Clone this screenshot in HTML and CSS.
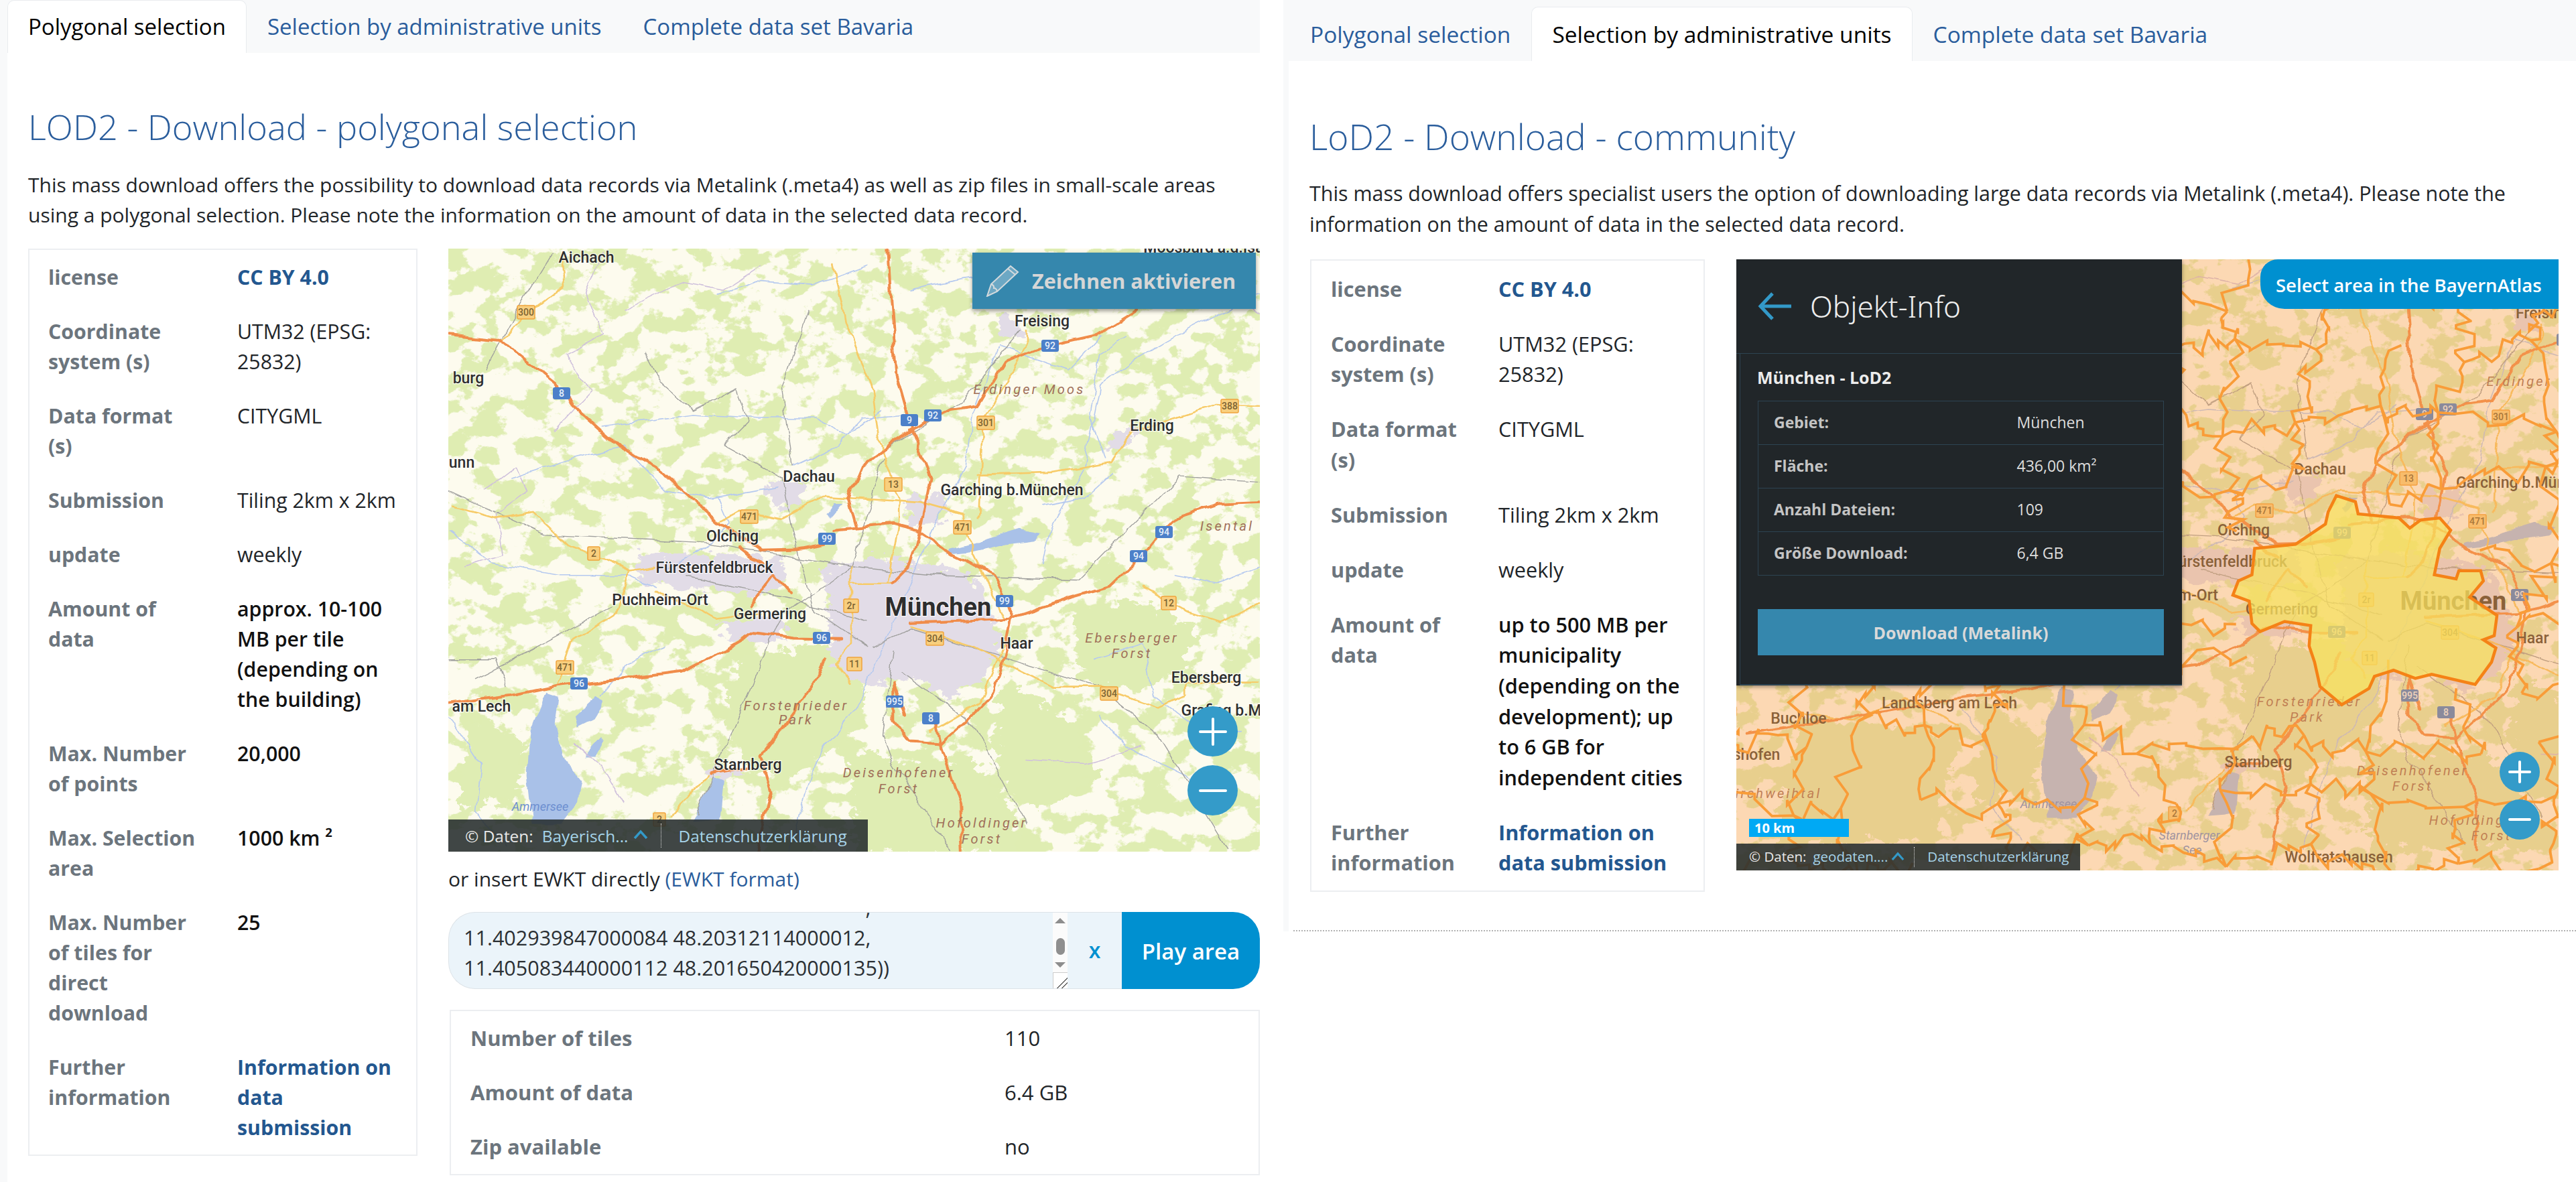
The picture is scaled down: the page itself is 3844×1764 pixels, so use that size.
FILE: index.html
```html
<!DOCTYPE html>
<html lang="en">
<head>
<meta charset="utf-8">
<title>LoD2 Download</title>
<link rel="stylesheet" href="styles.css">
</head>
<body>
<div class="page">

<section class="panel panel-a">
  <nav class="tabs">
    <a class="tab active">Polygonal selection</a>
    <a class="tab">Selection by administrative units</a>
    <a class="tab">Complete data set Bavaria</a>
  </nav>
  <div class="content">
    <h1>LOD2 - Download - polygonal selection</h1>
    <p class="intro">This mass download offers the possibility to download data records via Metalink (.meta4) as well as zip files in small-scale areas using a polygonal selection. Please note the information on the amount of data in the selected data record.</p>
    <div class="cols">
      <table class="facts">
        <tr><th>license</th><td><a class="link">CC BY 4.0</a></td></tr>
        <tr><th>Coordinate system (s)</th><td>UTM32 (EPSG: 25832)</td></tr>
        <tr><th>Data format (s)</th><td>CITYGML</td></tr>
        <tr><th>Submission</th><td>Tiling 2km x 2km</td></tr>
        <tr><th>update</th><td>weekly</td></tr>
        <tr><th>Amount of data</th><td class="strong">approx. 10-100 MB per tile (depending on<br>the building)</td></tr>
        <tr><th>Max. Number of points</th><td class="strong">20,000</td></tr>
        <tr><th>Max. Selection area</th><td class="strong">1000 km ²</td></tr>
        <tr><th>Max. Number of tiles for direct download</th><td class="strong">25</td></tr>
        <tr><th>Further information</th><td><a class="link">Information on<br>data<br>submission</a></td></tr>
      </table>
      <div class="workarea">
        <div class="map map-a">
          <svg class="mapsvg" width="1211" height="900" viewBox="0 0 1211 900">
            <defs>
              <filter id="noise" x="0" y="0" width="100%" height="100%" color-interpolation-filters="sRGB">
                <feTurbulence type="fractalNoise" baseFrequency=".026 .032" numOctaves="5" seed="11"/>
                <feColorMatrix type="matrix" values="0 0 0 0 .875  0 0 0 0 .93  0 0 0 0 .70  16 0 0 0 -7.9"/>
              </filter>
              <filter id="rough" x="-5%" y="-5%" width="110%" height="110%" color-interpolation-filters="sRGB">
                <feTurbulence type="fractalNoise" baseFrequency=".04" numOctaves="4" seed="4" result="n"/>
                <feDisplacementMap in="SourceGraphic" in2="n" scale="60" xChannelSelector="R" yChannelSelector="G"/>
              </filter>
              <filter id="soft" x="-5%" y="-5%" width="110%" height="110%" color-interpolation-filters="sRGB">
                <feTurbulence type="fractalNoise" baseFrequency=".022" numOctaves="2" seed="9" result="n"/>
                <feDisplacementMap in="SourceGraphic" in2="n" scale="18" xChannelSelector="R" yChannelSelector="G"/>
                <feGaussianBlur stdDeviation=".5"/>
              </filter>
              <g id="base">
                <rect x="-420" y="-100" width="1760" height="1120" fill="#fdfbee"/>
                <rect x="-420" y="-100" width="1760" height="1120" filter="url(#noise)"/>
                <g transform="translate(-7.9,-10.8) scale(.7908,.5995)">
                  <g filter="url(#rough)">
                    <g fill="#dfedb3">
                      <path d="M560 1040 L760 1000 L800 1120 L760 1240 L650 1340 L560 1300 L530 1160Z"/>
                      <path d="M1190 920 L1300 890 L1420 960 L1400 1070 L1300 1120 L1200 1090Z"/>
                      <path d="M760 1260 L880 1300 L1000 1290 L1080 1420 L1090 1530 L780 1530Z"/>
                      <path d="M1050 1100 L1180 1180 L1240 1330 L1130 1420 L1040 1340Z"/>
                      <path d="M50 1180 L150 1240 L140 1380 L30 1420Z"/>
                      <path d="M-300 1200 L0 1250 L-50 1500 L-350 1520Z"/>
                    </g>
                    <g fill="#e2dce7">
                      <path d="M720 810 L820 780 L900 810 L990 820 L1020 900 L1060 990 L1020 1090 L950 1140 L880 1080 L800 1110 L740 1050 L730 960Z"/>
                      <path d="M370 780 L520 780 L640 790 L640 850 L600 880 L520 870 L370 850Z"/>
                      <path d="M520 945 L630 930 L650 990 L540 995Z"/>
                      <path d="M610 600 L680 600 L680 660 L620 660Z"/>
                      <path d="M1045 195 L1095 195 L1100 240 L1055 245Z"/>
                      <path d="M1265 470 L1305 470 L1295 515 L1255 515Z"/>
                      <path d="M870 650 L940 620 L950 700 L885 710Z"/>
                      <path d="M490 1320 L545 1305 L555 1335 L505 1350Z"/>
                    </g>
                  </g>
                  <g filter="url(#soft)" fill="none" stroke-linecap="round" stroke-linejoin="round">
                    <g fill="#a9c1e8">
                      <path d="M195 1120 L218 1130 L212 1200 L225 1280 L262 1340 L255 1400 L225 1450 L170 1450 L160 1330 L165 1220Z"/>
                      <path d="M290 1130 L306 1145 L285 1190 L255 1210 L250 1180Z"/>
                      <path d="M295 1230 L303 1240 L290 1285 L272 1285 L275 1260Z"/>
                      <path d="M510 1335 L527 1345 L520 1440 L470 1445 L490 1400Z"/>
                      <path d="M1010 745 L1085 715 L1130 725 L1120 745 L1060 755 L1000 772 L950 778 L955 765Z"/>
                      <path d="M740 650 L755 650 L730 690 L725 680Z"/>
                    </g>
                    <g class="river" stroke="#b5c9ef">
                      <path d="M1240 235 L1180 320 L1050 260 L1000 430 L985 560 L930 700 L890 820 L840 980 L790 1130 L700 1300 L680 1400 L650 1530"/>
                      <path d="M1541 130 L1390 230 L1300 300 L1240 360 L1210 560 L1150 700 L1130 800"/>
                      <path d="M1290 240 L1240 280 L1220 440 L1250 540"/>
                      <path d="M880 120 L1000 90 L1090 130 L1210 150 L1290 100"/>
                      <path d="M520 130 L590 100 L700 110 L800 60"/>
                      <path d="M300 460 L470 430 L600 440 L700 440 L760 480 L830 420"/>
                      <path d="M130 590 L250 540 L340 510 L420 620 L510 640 L630 610"/>
                      <path d="M660 560 L740 510 L790 440 L870 430"/>
                      <path d="M10 720 L90 800 L220 830 L350 830 L400 860"/>
                      <path d="M520 640 L540 700 L500 760 L420 820"/>
                      <path d="M1130 660 L1210 640 L1260 580"/>
                      <path d="M1230 1040 L1320 1000 L1340 1130 L1430 1220 L1510 1220"/>
                      <path d="M1240 1180 L1290 1260 L1400 1330 L1460 1420"/>
                      <path d="M1380 830 L1460 850 L1541 810"/>
                      <path d="M300 1130 L350 1050 L420 1010"/>
                      <path d="M10 1180 L70 1300 L60 1420 L120 1510"/>
                    </g>
                    <g class="admin" stroke="#cfc0dc">
                      <path d="M300 30 L270 130 L300 230 L230 280 L280 370 L210 470"/>
                      <path d="M1541 180 L1480 130 L1500 30"/>
                      <path d="M80 620 L140 560 L160 620 L100 680 L110 780 L40 810"/>
                      <path d="M340 170 L450 100 L530 120 L600 60"/>
                      <path d="M250 1250 L300 1310 L340 1400"/>
                      <path d="M1100 1290 L1210 1300 L1320 1260"/>
                    </g>
                    <g class="rail" stroke="#a0a09e">
                      <path d="M205 30 L150 150 L80 320"/>
                      <path d="M380 275 L410 350 L470 420 L555 365 L575 450 L530 510 L640 590 L660 720 L700 920"/>
                      <path d="M10 620 L190 730 L500 750 L770 810 L920 830"/>
                      <path d="M460 835 L650 890 L800 945"/>
                      <path d="M690 170 L640 360 L660 560"/>
                      <path d="M10 1040 L100 1040 L120 1110"/>
                      <path d="M800 1010 L700 920"/>
                      <path d="M810 1010 L880 965 L1240 1110 L1350 1230 L1480 1510"/>
                      <path d="M920 830 L1200 840 L1390 585 L1541 600"/>
                      <path d="M830 540 L770 810 L640 930 L520 1300 L480 1430"/>
                      <path d="M870 1070 L1000 1200 L1100 1450"/>
                      <path d="M850 1020 L830 1230 L850 1300 L960 1520"/>
                      <path d="M1090 220 L980 400 L820 530"/>
                      <path d="M320 910 L150 1030 L60 1090"/>
                    </g>
                    <g class="yellow" stroke="#f7cb68">
                      <path d="M225 30 L230 110 L150 190 L110 250"/>
                      <path d="M735 60 L760 200 L810 370 L825 520 L860 640 L860 700 L840 850"/>
                      <path d="M520 700 L560 670 L640 690 L720 635 L900 650 L980 680 L1000 780 L1060 940"/>
                      <path d="M350 820 L300 790 L240 760 L170 675 L100 690 L20 660"/>
                      <path d="M350 820 L400 810"/>
                      <path d="M350 820 L340 880 L330 925 L240 1000 L215 1100"/>
                      <path d="M400 870 L520 940 L600 925"/>
                      <path d="M1010 690 L1020 450 L1100 260 L1100 220"/>
                      <path d="M1010 580 L1150 575 L1260 550 L1300 470 L1380 440 L1460 405 L1541 410"/>
                      <path d="M880 960 L1000 1010 L1150 1110 L1240 1110 L1350 1160 L1400 1130 L1400 1100 L1541 1100"/>
                      <path d="M1320 860 L1400 920 L1470 950 L1541 900"/>
                      <path d="M770 810 L770 1000 L740 1050 L770 1100"/>
                      <path d="M770 850 L850 850"/>
                      <path d="M500 1330 L430 1430"/>
                      <path d="M920 1220 L1010 1150 L1060 1000"/>
                      <path d="M-300 1190 L-200 1210 L-100 1150 L0 1220"/>
                    </g>
                    <g class="motor" stroke="#f08c4a">
                      <path d="M-400 1240 L-200 1200 L10 1150 L130 1130 L220 1105 L300 1095 L450 1070 L540 1010 L585 975 L660 988 L750 990"/>
                      <path d="M10 232 L110 245 L210 350 L245 410 L330 510 L410 570 L520 700 L600 770 L670 768 L720 755"/>
                      <path d="M740 720 L850 705 L895 720 L960 780 L1040 830 L1075 930 L1060 1030 L1040 1120 L990 1190 L940 1250 L880 1245 L850 1190 L850 1100"/>
                      <path d="M840 18 L845 150 L855 330 L885 470 L920 590 L900 720 L880 810 L850 850"/>
                      <path d="M880 470 L960 420 L1010 410 L1060 300 L1130 265 L1230 235 L1310 170"/>
                      <path d="M880 950 L1070 940 L1180 890 L1260 860 L1300 810 L1340 745 L1380 690 L1460 655 L1541 650"/>
                      <path d="M930 1200 L940 1260 L975 1400 L980 1530"/>
                      <path d="M590 1530 L620 1370 L600 1280 L640 1210 L700 1100 L720 1040"/>
                      <path d="M765 640 L790 560 L840 510 L885 470"/>
                      <path d="M765 640 L780 710"/>
                      <path d="M560 760 L600 800"/>
                      <path d="M625 830 L580 910"/>
                      <path d="M625 830 L655 875"/>
                      <path d="M505 1325 L570 1310"/>
                      <path d="M850 1100 L870 1180"/>
                    </g>
                  </g>
                </g>
                <g class="shields">
                  <g class="blue">
                    <g transform="translate(169,216)"><rect x="-13" y="-9" width="26" height="18" rx="3"/><text y="5">8</text></g>
                    <g transform="translate(688,256)"><rect x="-13" y="-9" width="26" height="18" rx="3"/><text y="5">9</text></g>
                    <g transform="translate(723,249)"><rect x="-13" y="-9" width="26" height="18" rx="3"/><text y="5">92</text></g>
                    <g transform="translate(898,145)"><rect x="-13" y="-9" width="26" height="18" rx="3"/><text y="5">92</text></g>
                    <g transform="translate(565,433)"><rect x="-13" y="-9" width="26" height="18" rx="3"/><text y="5">99</text></g>
                    <g transform="translate(830,526)"><rect x="-13" y="-9" width="26" height="18" rx="3"/><text y="5">99</text></g>
                    <g transform="translate(557,581)"><rect x="-13" y="-9" width="26" height="18" rx="3"/><text y="5">96</text></g>
                    <g transform="translate(195,649)"><rect x="-13" y="-9" width="26" height="18" rx="3"/><text y="5">96</text></g>
                    <g transform="translate(1068,423)"><rect x="-13" y="-9" width="26" height="18" rx="3"/><text y="5">94</text></g>
                    <g transform="translate(1030,459)"><rect x="-13" y="-9" width="26" height="18" rx="3"/><text y="5">94</text></g>
                    <g transform="translate(666,676)"><rect x="-13" y="-9" width="26" height="18" rx="3"/><text y="5">995</text></g>
                    <g transform="translate(720,701)"><rect x="-13" y="-9" width="26" height="18" rx="3"/><text y="5">8</text></g>
                  </g>
                  <g class="amber">
                    <g transform="translate(116,95)"><rect x="-13" y="-10" width="26" height="20" rx="2"/><text y="5">300</text></g>
                    <g transform="translate(449,400)"><rect x="-13" y="-10" width="26" height="20" rx="2"/><text y="5">471</text></g>
                    <g transform="translate(664,352)"><rect x="-13" y="-10" width="26" height="20" rx="2"/><text y="5">13</text></g>
                    <g transform="translate(802,260)"><rect x="-13" y="-10" width="26" height="20" rx="2"/><text y="5">301</text></g>
                    <g transform="translate(767,416)"><rect x="-13" y="-10" width="26" height="20" rx="2"/><text y="5">471</text></g>
                    <g transform="translate(1166,235)"><rect x="-13" y="-10" width="26" height="20" rx="2"/><text y="5">388</text></g>
                    <g transform="translate(217,455)"><rect x="-9" y="-10" width="18" height="20" rx="2"/><text y="5">2</text></g>
                    <g transform="translate(601,533)"><rect x="-11" y="-10" width="22" height="20" rx="2"/><text y="5">2r</text></g>
                    <g transform="translate(1075,529)"><rect x="-11" y="-10" width="22" height="20" rx="2"/><text y="5">12</text></g>
                    <g transform="translate(726,582)"><rect x="-13" y="-10" width="26" height="20" rx="2"/><text y="5">304</text></g>
                    <g transform="translate(606,620)"><rect x="-11" y="-10" width="22" height="20" rx="2"/><text y="5">11</text></g>
                    <g transform="translate(174,625)"><rect x="-13" y="-10" width="26" height="20" rx="2"/><text y="5">471</text></g>
                    <g transform="translate(986,664)"><rect x="-13" y="-10" width="26" height="20" rx="2"/><text y="5">304</text></g>
                    <g transform="translate(315,852)"><rect x="-9" y="-10" width="18" height="20" rx="2"/><text y="5">2</text></g>
                  </g>
                </g>
              </g>
            </defs>
            <use href="#base"/>
            <g class="place">
              <text x="1131" y="6">Moosburg a.d.Isar</text>
              <text x="206" y="21">Aichach</text>
              <text x="886" y="116">Freising</text>
              <text x="30" y="201">burg</text>
              <text x="1050" y="272">Erding</text>
              <text x="20" y="327">unn</text>
              <text x="538" y="348">Dachau</text>
              <text x="841" y="368">Garching b.München</text>
              <text x="424" y="437">Olching</text>
              <text x="397" y="484">Fürstenfeldbruck</text>
              <text x="316" y="532">Puchheim-Ort</text>
              <text x="480" y="553">Germering</text>
              <text x="848" y="597">Haar</text>
              <text x="1131" y="648">Ebersberg</text>
              <text x="1160" y="697">Grafing b.Mü</text>
              <text x="40" y="691">g am Lech</text>
              <text x="447" y="778">Starnberg</text>
              <text class="city" x="731" y="548">München</text>
            </g>
            <g class="forest">
              <text x="867" y="217">Erdinger Moos</text>
              <text x="1162" y="421">Isental</text>
              <text x="1020" y="588">Ebersberger</text>
              <text x="1020" y="611">Forst</text>
              <text x="519" y="689">Forstenrieder</text>
              <text x="519" y="710">Park</text>
              <text x="672" y="789">Deisenhofener</text>
              <text x="672" y="813">Forst</text>
              <text x="796" y="864">Hofoldinger</text>
              <text x="796" y="888">Forst</text>
              <text class="lake" x="137" y="839">Ammersee</text>
            </g>
          </svg>
          <button class="draw">
            <svg class="pencil" width="50" height="48" viewBox="0 0 50 48"><path d="M2 47 L8 29 L37 2 L48 11 L17 40 Z" fill="#6da8c4" stroke="#d4dadd" stroke-width="2" stroke-linejoin="miter"/><path d="M33 6 L44 15 M8 29 Q13 31 12 35 Q16 35 17 40" fill="none" stroke="#d4dadd" stroke-width="2"/></svg>
            <span>Zeichnen aktivieren</span>
          </button>
          <div class="zoomer zoomer-a">
            <span class="zbtn"><i class="plus"></i></span>
            <span class="zbtn"><i class="minus"></i></span>
          </div>
          <div class="attr attr-a">
            <span class="attr-l">© Daten:</span><a class="attr-v">Bayerisch...</a>
            <svg class="caret" width="22" height="14" viewBox="0 0 22 14"><path d="M2 13 L11 3 L20 13" fill="none" stroke="#3399c8" stroke-width="3.5"/></svg>
            <i class="attr-sep"></i><a class="attr-v">Datenschutzerklärung</a>
          </div>
        </div>
        <p class="ewkt">or insert EWKT directly <a class="plain">(EWKT format)</a></p>
        <div class="inputrow">
          <div class="area">
            <div><span class="ghost">11.400867530000096 48.20556283000015</span>,</div>
            <div>11.402939847000084 48.20312114000012,</div>
            <div>11.405083440000112 48.201650420000135))</div>
          </div>
          <div class="scroll">
            <i class="arrow-up"></i><i class="thumb"></i><i class="arrow-down"></i>
            <i class="resize"></i>
          </div>
          <span class="clear">x</span>
          <a class="play">Play area</a>
        </div>
        <table class="result">
          <tr><th>Number of tiles</th><td>110</td></tr>
          <tr><th>Amount of data</th><td>6.4 GB</td></tr>
          <tr><th>Zip available</th><td>no</td></tr>
        </table>
      </div>
    </div>
  </div>
</section>

<section class="panel panel-b">
  <nav class="tabs">
    <a class="tab">Polygonal selection</a>
    <a class="tab active">Selection by administrative units</a>
    <a class="tab">Complete data set Bavaria</a>
  </nav>
  <div class="content">
    <h1>LoD2 - Download - community</h1>
    <p class="intro">This mass download offers specialist users the option of downloading large data records via Metalink (.meta4). Please note the information on the amount of data in the selected data record.</p>
    <div class="cols">
      <table class="facts">
        <tr><th>license</th><td><a class="link">CC BY 4.0</a></td></tr>
        <tr><th>Coordinate system (s)</th><td>UTM32 (EPSG:<br>25832)</td></tr>
        <tr><th>Data format (s)</th><td>CITYGML</td></tr>
        <tr><th>Submission</th><td>Tiling 2km x 2km</td></tr>
        <tr><th>update</th><td>weekly</td></tr>
        <tr><th>Amount of data</th><td class="strong">up to 500 MB per<br>municipality<br>(depending on the<br>development); up<br>to 6 GB for<br>independent cities</td></tr>
        <tr><th>Further information</th><td><a class="link">Information on<br>data submission</a></td></tr>
      </table>
      <div class="map map-b">
        <svg class="mapsvg" width="1227" height="912" viewBox="0 0 1227 912">
          <use href="#base" transform="translate(339,-25)"/>
          <g class="place dim">
            <text x="871" y="321">Dachau</text>
            <text x="757" y="412">Olching</text>
            <text x="822" y="459" text-anchor="end">Fürstenfeldbruck</text>
            <text x="719" y="509" text-anchor="end">Puchheim-Ort</text>
            <text x="814" y="530">Germering</text>
            <text x="1074" y="341" class="start">Garching b.München</text>
            <text x="1188" y="573">Haar</text>
            <text x="1204" y="88">Freising</text>
            <text x="318" y="670">Landsberg am Lech</text>
            <text x="93" y="693">Buchloe</text>
            <text x="30" y="747">shofen</text>
            <text x="779" y="758">Starnberg</text>
            <text x="899" y="900">Wolfratshausen</text>
            <text class="city" x="1070" y="523">München</text>
          </g>
          <g class="forest">
            <text x="1168" y="189">Erdinger</text>
            <text x="855" y="667">Forstenrieder</text>
            <text x="852" y="690">Park</text>
            <text x="1009" y="770">Deisenhofener</text>
            <text x="1009" y="793">Forst</text>
            <text x="1102" y="844">Hofoldinger</text>
            <text x="1127" y="867">Forst</text>
            <text x="63" y="804">irchweihtal</text>
            <text class="lake" x="466" y="819">Ammersee</text>
            <text class="lake" x="676" y="866">Starnberger</text>
            <text class="lake" x="680" y="888">See</text>
          </g>
          <rect class="tint" width="1227" height="912"/>
          <g id="admin" class="boundaries"></g>
          <g transform="translate(-18.7,-17) scale(.8125,.606)">
            <path class="munich" d="M1125 610 L1160 625 L1165 655 L1240 665 L1260 690 L1280 670 L1315 665 L1335 695 L1315 740 L1305 805 L1345 815 L1350 795 L1390 795 L1395 820 L1370 860 L1420 905 L1415 955 L1395 965 L1418 985 L1410 1020 L1380 1075 L1300 1050 L1270 1060 L1230 1040 L1195 1055 L1185 1085 L1135 1125 L1095 1080 L1085 1020 L1075 980 L1078 930 L1030 920 L985 945 L970 925 L965 870 L935 855 L945 820 L970 805 L975 740 L1050 730 L1105 680 L1110 650Z"/>
          </g>
        </svg>
        <aside class="info">
          <header class="info-head">
            <svg class="back" width="52" height="44" viewBox="0 0 52 44"><path d="M22 3 L4 22 L22 41 M5 22 H50" fill="none" stroke="#3399c8" stroke-width="5"/></svg>
            <span>Objekt-Info</span>
          </header>
          <div class="info-body">
            <h2>München - LoD2</h2>
            <table class="info-table">
              <tr><th>Gebiet:</th><td>München</td></tr>
              <tr><th>Fläche:</th><td>436,00 km²</td></tr>
              <tr><th>Anzahl Dateien:</th><td>109</td></tr>
              <tr><th>Größe Download:</th><td>6,4 GB</td></tr>
            </table>
            <a class="dl">Download (Metalink)</a>
          </div>
        </aside>
        <a class="atlas">Select area in the BayernAtlas</a>
        <div class="zoomer zoomer-b">
          <span class="zbtn"><i class="plus"></i></span>
          <span class="zbtn"><i class="minus"></i></span>
        </div>
        <div class="scale">10 km</div>
        <div class="attr attr-b">
          <span class="attr-l">© Daten:</span><a class="attr-v">geodaten....</a>
          <svg class="caret" width="22" height="14" viewBox="0 0 22 14"><path d="M2 13 L11 3 L20 13" fill="none" stroke="#3399c8" stroke-width="3.5"/></svg>
          <i class="attr-sep"></i><a class="attr-v">Datenschutzerklärung</a>
        </div>
      </div>
    </div>
  </div>
</section>

</div>
<script src="map.js"></script>
</body>
</html>
```
FILE: styles.css
```css
* { box-sizing: border-box; }
html, body { margin: 0; padding: 0; background: #fff; }
body { font-family: "Open Sans", "Noto Sans", sans-serif; color: #212529; overflow: hidden; }
.page { display: flex; align-items: flex-start; width: 3844px; height: 1764px; overflow: hidden; }
a { text-decoration: none; }

/* panels */
.panel-a { --fs: 30.3px; --ps: 30px; --ts: 33px; --lh: 45px; --pad: 18px; width: 1880px; height: 1764px; flex: none; border-left: 11px solid #f8f9fa; }
.panel-b { --fs: 30.7px; --ps: 30.4px; --ts: 33.5px; --lh: 45.6px; --pad: 18.2px; width: 1929px; height: 1390px; flex: none; margin-left: 35px; border-left: 8px solid #f8f9fa; position: relative; }
.panel-b::after { content: ""; position: absolute; left: 7px; right: 0; bottom: 0; border-bottom: 2px dotted #b2b2b2; }

.tabs { display: flex; align-items: flex-end; background: #f8f9fa; font-size: var(--ts); }
.panel-a .tabs { height: 79px; margin-left: -11px; padding-left: 11px; }
.panel-b .tabs { height: 91px; margin-left: -8px; padding-left: 9px; }
.tab { display: flex; align-items: center; padding: 0 30px; height: 100%; color: #2a5d9c; border: 1px solid transparent; border-bottom: 0; white-space: nowrap; }
.panel-b .tab { height: 81px; }
.panel-a .tab { padding-bottom: 1px; }
.tab.active { background: #fff; color: #000; border-color: #e9ecef; border-radius: 10px 10px 0 0; }

.content { background: #fff; font-size: var(--fs); line-height: var(--lh); }
.panel-a .content { padding: 78px 0 0 31px; }
.panel-b .content { padding: 80px 28px 0 32px; }
h1 { margin: 0; font-weight: 300; color: #2a5d9c; }
.panel-a h1 { font-size: 52.4px; line-height: 64px; }
.panel-b h1 { font-size: 53.2px; line-height: 65px; margin-left: -1px; }
.intro { margin: 0; font-size: var(--ps); }
.panel-a .intro { margin-top: 32px; margin-bottom: 28px; }
.panel-b .intro { margin-top: 30px; margin-bottom: 30px; margin-left: -1px; }
.cols { display: flex; align-items: flex-start; }
.panel-a .cols { gap: 46px; }
.panel-b .cols { gap: 47px; }

/* facts table */
.facts { border: 2px solid #eceef1; border-collapse: separate; border-spacing: 0; table-layout: fixed; flex: none; }
.panel-a .facts { width: 581px; }
.panel-b .facts { width: 589px; }
.facts th, .facts td, .result th, .result td { vertical-align: top; text-align: left; padding-top: var(--pad); padding-bottom: var(--pad); }
.facts th, .result th { font-weight: 700; color: #6c757d; }
.facts td, .result td { font-weight: 400; }
.facts th { padding-left: 28px; padding-right: 28px; }
.panel-a .facts th { width: 281px; }
.panel-b .facts th { width: 250px; padding-left: 29px; padding-right: 20px; }
.panel-b .facts tr:first-child th, .panel-b .facts tr:first-child td { padding-top: 19.5px; }
.facts td { padding-left: 29px; padding-right: 12px; }
.facts td.strong { font-weight: 600; color: #111; }
.link { font-weight: 700; color: #23578f; }

/* work column */
.workarea { width: 1211px; flex: none; font-size: var(--ps); }
.map { position: relative; overflow: hidden; flex: none; background: #fdfbee; }
.map-a { width: 1211px; height: 900px; }
.map-b { width: 1227px; height: 912px; }
.mapsvg { display: block; }
.ewkt { margin: 18px 0 27px; }
.plain { color: #2a5d9c; }

.inputrow { display: flex; height: 115px; font-size: 30.5px; line-height: 45px; }
.area { flex: none; width: 902px; height: 115px; background: #ebf4fa; border: 1px solid #dde3e8; border-right: 0; border-radius: 40px 0 0 40px; padding: 0 0 8px 22px; overflow: hidden; display: flex; flex-direction: column; justify-content: flex-end; white-space: nowrap; color: #2b3034; }
.ghost { color: transparent; }
.scroll { flex: none; width: 22px; background: #fbfbfb; border-top: 1px solid #dde3e8; border-bottom: 1px solid #dde3e8; display: flex; flex-direction: column; align-items: center; position: relative; }
.arrow-up { width: 0; height: 0; margin-top: 8px; border: 8px solid transparent; border-top: 0; border-bottom-color: #8d8d8d; }
.thumb { width: 13px; height: 25px; margin-top: 22px; background: #8f8f8f; border-radius: 7px; }
.arrow-down { width: 0; height: 0; margin-top: 11px; border: 8px solid transparent; border-bottom: 0; border-top-color: #8d8d8d; }
.resize { position: absolute; left: 0; right: 0; bottom: 0; height: 24px; background: linear-gradient(135deg, #fff 62%, #666 62%, #666 68%, #fff 68%, #fff 78%, #666 78%, #666 84%, #fff 84%); border-top: 1px solid #ccc; border-left: 1px solid #ccc; }
.clear { flex: none; width: 81px; background: #ebf4fa; border-top: 1px solid #dde3e8; border-bottom: 1px solid #dde3e8; color: #0090d0; font-size: 32px; font-weight: 600; display: flex; align-items: center; justify-content: center; padding-bottom: 2px; }
.play { flex: none; width: 206px; background: #0090d0; color: #fff; font-size: 33px; font-weight: 600; border-radius: 0 40px 40px 0; display: flex; align-items: center; justify-content: center; padding-top: 2px; }

.result { width: 1209px; margin: 31px 0 0 2px; border: 2px solid #eceef1; border-collapse: separate; border-spacing: 0; table-layout: fixed; font-size: 31px; }
.result th { width: 826px; padding-left: 29px; }
.result td { padding-left: 0; }

/* map chrome */
.draw { position: absolute; top: 6px; right: 6px; width: 423px; height: 84px; display: flex; align-items: center; gap: 19px; padding: 0 0 0 20px; border: 0; background: #3587ad; color: #d6d6d6; font: 700 30.6px "Open Sans", sans-serif; box-shadow: 0 3px 6px rgba(0,0,0,.4); white-space: nowrap; }
.pencil { flex: none; }
.zoomer { position: absolute; display: flex; flex-direction: column; }
.zoomer-a { right: 33px; top: 683px; gap: 13px; }
.zoomer-b { right: 28px; top: 735px; gap: 11px; }
.zbtn { display: flex; align-items: center; justify-content: center; background: #349bc9; border-radius: 50%; position: relative; }
.zoomer-a .zbtn { width: 75px; height: 75px; }
.zoomer-b .zbtn { width: 60px; height: 60px; }
.plus, .minus { position: relative; display: block; background: #fff; border-radius: 2px; }
.zoomer-a .plus, .zoomer-a .minus { width: 42px; height: 4px; }
.zoomer-b .plus, .zoomer-b .minus { width: 34px; height: 4px; }
.plus::after { content: ""; position: absolute; left: 50%; top: 50%; background: #fff; border-radius: 2px; transform: translate(-50%, -50%); width: 4px; }
.zoomer-a .plus::after { height: 42px; }
.zoomer-b .plus::after { height: 34px; }

.attr { position: absolute; left: 0; bottom: 0; display: flex; align-items: center; background: rgba(38,44,46,.88); white-space: nowrap; }
.attr-a { width: 626px; height: 48px; padding-left: 25px; font-size: 24.4px; }
.attr-b { width: 513px; height: 40px; padding-left: 19px; font-size: 20.5px; }
.attr-l { color: #e8e8e8; }
.attr-v { color: #a6d3e9; }
.attr-a .attr-l { margin-right: 13px; }
.attr-b .attr-l { margin-right: 10px; }
.caret { margin: 0 0 4px 8px; flex: none; }
.attr-b .caret { width: 20px; height: 13px; margin-left: 5px; }
.attr-sep { display: block; border-left: 1px dotted #ddd; height: 36px; }
.attr-a .attr-sep { margin: 0 25px 0 19px; }
.attr-b .attr-sep { margin: 0 19px 0 14px; height: 30px; }

.info { position: absolute; left: 0; top: 0; width: 665px; height: 636px; background: #212629; color: #ddd; box-shadow: 0 2px 6px rgba(0,0,0,.4); display: flex; flex-direction: column; line-height: 1.2; }
.info-head { height: 141px; flex: none; display: flex; align-items: center; gap: 26px; padding: 0 0 0 32px; font: 300 44px "Noto Sans", sans-serif; color: #eee; border-bottom: 1px solid #2d4452; }
.back { flex: none; }
.info-body { flex: 1; margin-left: 5px; padding: 21px 27px 0 25px; border-left: 1px solid #2d4452; border-bottom: 2px solid #2d4452; }
.info-body h2 { margin: 0 0 21px; font-size: 25px; font-weight: 700; color: #ececec; line-height: 28px; }
.info-table { width: 606px; margin-left: 1px; border-collapse: collapse; table-layout: fixed; font-size: 23px; }
.info-table th, .info-table td { height: 65px; border: 1px solid #2d4452; text-align: left; padding: 0; }
.info-table th { width: 386px; padding-left: 23px; border-right: 0; font-weight: 700; color: #c4c4c4; }
.info-table td { padding-left: 0; border-left: 0; font-weight: 400; color: #ddd; }
.dl { display: flex; align-items: center; justify-content: center; width: 606px; height: 69px; margin: 50px 0 0 1px; background: #3587ad; color: #d9d9d9; font-size: 25px; font-weight: 700; }

.atlas { position: absolute; right: 0; top: 0; width: 445px; height: 74px; display: flex; align-items: center; padding: 4px 0 0 23px; background: #0090d0; color: #fff; font-size: 27.5px; font-weight: 600; border-radius: 26px 0 0 36px; white-space: nowrap; }
.scale { position: absolute; left: 19px; top: 835px; width: 149px; height: 27px; padding-left: 8px; background: #00a9f4; color: #fff; font-size: 20px; font-weight: 700; line-height: 27px; }

/* svg text */
.place text { font: 500 23px Roboto, sans-serif; fill: #2e2e2e; text-anchor: middle; paint-order: stroke; stroke: rgba(255,255,255,.75); stroke-width: 2.5px; }
.place text[text-anchor="end"] { text-anchor: end; }
.place text.start { text-anchor: start; }
.place text.city { font-size: 38px; font-weight: 700; }
.place.dim text { fill: #4b4030; stroke: none; }
.forest text { font: italic 400 20px Roboto, sans-serif; letter-spacing: 3.2px; fill: #a0705a; text-anchor: middle; }
.forest text.lake { font-size: 18px; letter-spacing: 0; fill: #6d8fd0; }
.shields text { font: 500 14px Roboto, sans-serif; text-anchor: middle; }
.blue rect { fill: #4c80c9; }
.blue text { fill: #e8f0fa; }
.amber rect { fill: #f8cf7e; stroke: #f0a43c; stroke-width: 1.5px; }
.amber text { fill: #7c6333; }
.motor path { stroke-width: 4px; vector-effect: non-scaling-stroke; }
.yellow path { stroke-width: 2.6px; vector-effect: non-scaling-stroke; }
.rail path { stroke-width: 1.4px; vector-effect: non-scaling-stroke; }
.river path { stroke-width: 1.6px; vector-effect: non-scaling-stroke; }
.admin path { stroke-width: 1.5px; vector-effect: non-scaling-stroke; }
.tint { fill: #fa9a4a; opacity: .36; }
.boundaries path { fill: none; stroke: #f99c38; stroke-width: 3.8px; stroke-linejoin: miter; }
.munich { fill: #f6e25e; fill-opacity: .72; stroke: #f58216; stroke-width: 4.5px; vector-effect: non-scaling-stroke; stroke-linejoin: miter; }
```
FILE: map.js
```js
// Draws the municipal boundary network over the second map (decorative, seeded).
(function () {
  var seed = 20240611;
  function rnd() {
    seed |= 0; seed = seed + 0x6D2B79F5 | 0;
    var t = Math.imul(seed ^ seed >>> 15, 1 | seed);
    t = t + Math.imul(t ^ t >>> 7, 61 | t) ^ t;
    return ((t ^ t >>> 14) >>> 0) / 4294967296;
  }
  var W = 112, H = 94, cols = 13, rows = 11, v = [];
  for (var r = 0; r < rows; r++) {
    v.push([]);
    for (var c = 0; c < cols; c++) {
      v[r].push([c * W - 40 + (rnd() - .5) * 70, r * H - 40 + (rnd() - .5) * 60]);
    }
  }
  function edge(a, b) {
    var mx = (a[0] + b[0]) / 2, my = (a[1] + b[1]) / 2;
    if (mx > 745 && mx < 1150 && my > 355 && my < 665) return '';
    if (rnd() < .14) return '';
    var n = 5 + Math.floor(rnd() * 4), d = 'M' + a[0].toFixed(1) + ' ' + a[1].toFixed(1);
    var dx = b[0] - a[0], dy = b[1] - a[1], len = Math.sqrt(dx * dx + dy * dy) || 1;
    var nx = -dy / len, ny = dx / len;
    for (var i = 1; i < n; i++) {
      var t = i / n, o = (rnd() - .5) * 36;
      var x = a[0] + dx * t + nx * o, y = a[1] + dy * t + ny * o;
      // stair-step between points, as municipal boundaries on this map do
      if (rnd() < .65) d += ' L' + x.toFixed(1) + ' ' + (y - (rnd() - .5) * 20).toFixed(1);
      d += ' L' + x.toFixed(1) + ' ' + y.toFixed(1);
    }
    return d + ' L' + b[0].toFixed(1) + ' ' + b[1].toFixed(1);
  }
  var out = [];
  for (r = 0; r < rows; r++) {
    for (c = 0; c < cols; c++) {
      if (c + 1 < cols) out.push(edge(v[r][c], v[r][c + 1]));
      if (r + 1 < rows) out.push(edge(v[r][c], v[r + 1][c]));
    }
  }
  var g = document.getElementById('admin');
  if (g) {
    out.forEach(function (d) {
      if (!d) return;
      var p = document.createElementNS('http://www.w3.org/2000/svg', 'path');
      p.setAttribute('d', d);
      g.appendChild(p);
    });
  }
})();
```
